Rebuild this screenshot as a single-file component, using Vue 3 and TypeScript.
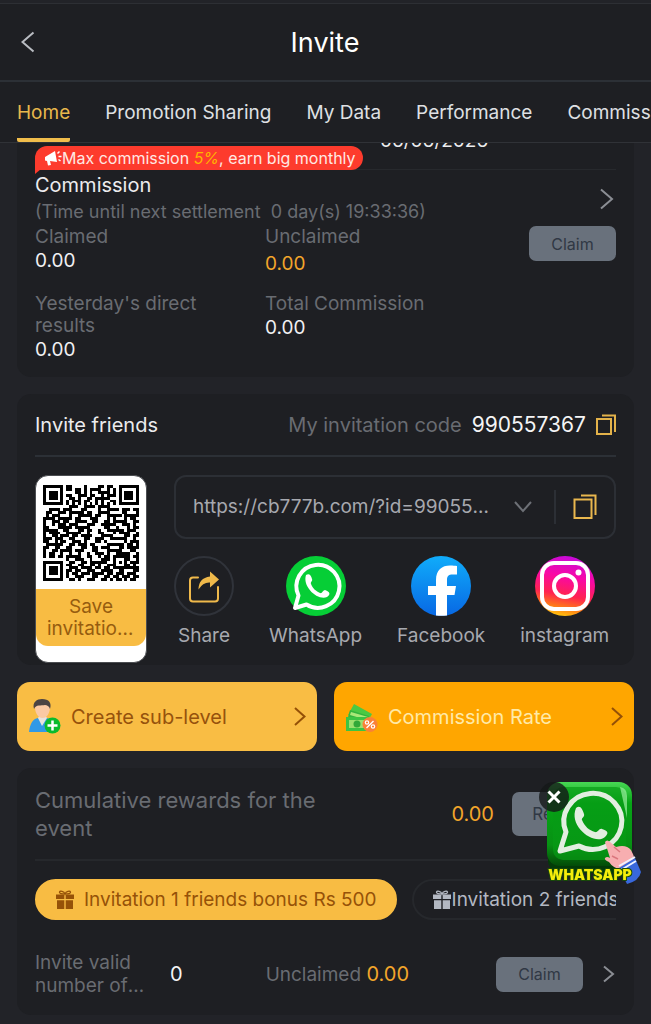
<script setup lang="ts">
import { ref } from 'vue'

interface Channel {
  id: string
  label: string
}

const tabs: string[] = ['Home', 'Promotion Sharing', 'My Data', 'Performance', 'Commission']
const activeTab = ref('Home')

const channels: Channel[] = [
  { id: 'share', label: 'Share' },
  { id: 'whatsapp', label: 'WhatsApp' },
  { id: 'facebook', label: 'Facebook' },
  { id: 'instagram', label: 'instagram' },
]

const inviteLink = ref('https://cb777b.com/?id=990557367')
const inviteCode = '990557367'

const bonuses: string[] = ['Invitation 1 friends bonus Rs 500', 'Invitation 2 friends bonus Rs 1000']
const activeBonus = ref(0)
const floatOpen = ref(true)

const qrRows: string[] = [
  '111111101100001000011011001111111',
  '100000101101101011110010101000001',
  '101110100001101010011110101011101',
  '101110101100111011001011101011101',
  '101110100110100110111110001011101',
  '100000101011101100101001101000001',
  '111111101010101010101010101111111',
  '000000000111001111011110000000000',
  '001111011100011000010011110111011',
  '011001110111110110011110000110001',
  '010111000100111110110011111011111',
  '111101111101100011100010100010110',
  '100111011001111001100110111110011',
  '100101110111000111001111100111010',
  '110001111101111100000110010001011',
  '111110011000110110010011111101110',
  '101111001111100100011000101111001',
  '100110111011011110001111000011011',
  '111011100110001100111001111110010',
  '110010110011101000110100000010111',
  '011111100110111011000011111101101',
  '110011001100011001101110001101111',
  '100110111101110001100011111000110',
  '101100100100100100111010011111001',
  '101101101111100110010110111111011',
  '000000001001110010001110100011001',
  '111111100110011011111100101010111',
  '100000101100110011010011100011010',
  '101110100111011110110110111111111',
  '101110101101100111001111001100011',
  '101110101011011101111011011101110',
  '100000101001110001100110110111011',
  '111111100110100111001101011010110',
]
const qrPath = qrRows
  .map((row, y) => [...row].map((c, x) => (c === '1' ? `M${x} ${y}h1v1h-1z` : '')).join(''))
  .join('')
</script>

<template>
  <div class="page">
    <header class="top">
      <div class="nav">
        <button class="icon-btn back" type="button" aria-label="Back">
          <svg width="14" height="22" viewBox="0 0 14 22"><path d="M12.500 1.500 1.500 11l11 9.500" fill="none" stroke="#b9bcc2" stroke-width="2" /></svg>
        </button>
        <h1>Invite</h1>
      </div>
      <nav class="tabs">
        <a v-for="tab in tabs" :key="tab" href="#" class="tab" :class="{ active: tab === activeTab }" @click.prevent="activeTab = tab">{{ tab }}</a>
      </nav>
    </header>

    <main class="content">
      <section class="card commission">
        <div class="date">06/06/2026</div>
        <div class="ribbon">
          <svg width="18" height="16" viewBox="0 0 18 16" fill="#fff">
            <path d="M1 7 11 1l2 11-7-1 1 4-3 .5L3 11l-2-.5z" />
            <path d="m13.500 3.500 2-2M14.500 6.500h3M14.500 9.500l2 1.500" stroke="#fff" stroke-width="1.500" />
          </svg>
          <span>Max commission <em>5%</em>, earn big monthly</span>
          <svg class="tail" width="6" height="5" viewBox="0 0 6 5"><path d="M0 0h6L0 5z" fill="#fd3b2d" /></svg>
        </div>
        <div class="comm-head">
          <div>
            <h2>Commission</h2>
            <p class="settle">(Time until next settlement &nbsp;0 day(s) 19:33:36)</p>
          </div>
          <button class="icon-btn" type="button" aria-label="Commission details">
            <svg width="14" height="22" viewBox="0 0 14 22"><path d="m1 1.500 11 9.500L1 20.500" fill="none" stroke="#8b8e94" stroke-width="2" /></svg>
          </button>
        </div>
        <div class="stats">
          <div class="stat"><span>Claimed</span><b>0.00</b></div>
          <div class="stat"><span>Unclaimed</span><b class="low">0.00</b></div>
          <button class="grey-btn claim" type="button">Claim</button>
          <div class="stat"><span>Yesterday's direct results</span><b>0.00</b></div>
          <div class="stat wide"><span>Total Commission</span><b>0.00</b></div>
        </div>
      </section>

      <section class="card friends">
        <div class="friends-head">
          <h2>Invite friends</h2>
          <div class="code">
            <span>My invitation code</span>
            <b>{{ inviteCode }}</b>
            <button class="icon-btn" type="button" aria-label="Copy code">
              <svg width="20" height="22" viewBox="0 0 20 22" fill="none" stroke="#e3b24a" stroke-width="2"><path d="M1 5h14v15H1zM6 1.500h13V18" /></svg>
            </button>
          </div>
        </div>
        <div class="friends-body">
          <div class="qr">
            <svg class="qr-code" viewBox="0 0 33 33" shape-rendering="crispEdges"><path :d="qrPath" fill="#000" /></svg>
            <button class="save" type="button"><span>Save</span> <span>invitation code</span></button>
          </div>
          <div class="share">
            <div class="link">
              <select v-model="inviteLink" aria-label="Invitation link">
                <option>https://cb777b.com/?id=990557367</option>
              </select>
              <svg class="down" width="18" height="12" viewBox="0 0 18 12"><path d="m1 1 8 9 8-9" fill="none" stroke="#6d7076" stroke-width="2" /></svg>
              <button class="icon-btn copy" type="button" aria-label="Copy link">
                <svg width="24" height="26" viewBox="0 0 24 26" fill="none" stroke="#e9b74e" stroke-width="2"><path d="M1.500 5.500h17V24h-17zM8 1.500h14.500V21" /></svg>
              </button>
            </div>
            <div class="channels">
              <button v-for="c in channels" :key="c.id" type="button" class="channel">
                <svg v-if="c.id === 'share'" width="60" height="60" viewBox="0 0 60 60">
                  <circle cx="30" cy="30" r="29" fill="none" stroke="#30333a" stroke-width="2" />
                  <path d="M24 21.500h-5q-3 0-3 3v18q0 3 3 3h22q3 0 3-3V31" fill="none" stroke="#efb94b" stroke-width="2" stroke-linecap="round" />
                  <path d="M36 15.500 45 23.500l-9 8v-5q-7-.5-11.500 7Q24.500 22 36 20.500z" fill="#efb94b" />
                </svg>
                <svg v-else-if="c.id === 'whatsapp'" width="60" height="60" viewBox="0 0 60 60">
                  <circle cx="30" cy="30" r="30" fill="#06ce36" />
                  <path d="M9 52l3.500-12.500A21.500 21.500 0 1 1 20.500 48.500z" fill="none" stroke="#fff" stroke-width="4" stroke-linejoin="round" />
                  <path d="M20 19c3-2 5 0 6 4 1 2-2 3-1 5 2 5 5 7 9 9 2 1 3-3 5-3 5 2 6 4 2 7-9 4-25-10-21-22z" fill="#fff" />
                </svg>
                <svg v-else-if="c.id === 'facebook'" width="60" height="60" viewBox="0 0 60 60">
                  <defs><linearGradient id="fb" x1="0" y1="0" x2="0" y2="1"><stop offset="0" stop-color="#10acfa" /><stop offset="1" stop-color="#0868e4" /></linearGradient></defs>
                  <circle cx="30" cy="30" r="30" fill="url(#fb)" />
                  <path d="M25 59.600V39h-8v-9h8v-6c0-10 6-14.500 14-14.500 3 0 5 .2 7 .5v8.500h-4c-5 0-6 2-6 5.500v6h9l-1.500 9H36v20.400q-5 .8-11 .2z" fill="#fff" />
                </svg>
                <svg v-else width="60" height="60" viewBox="0 0 60 60">
                  <defs>
                    <linearGradient id="ig" x1="0.600" y1="0" x2="0.400" y2="1"><stop offset="0" stop-color="#c60adb" /><stop offset="0.350" stop-color="#fa08a4" /><stop offset="0.650" stop-color="#ff2450" /><stop offset="0.850" stop-color="#ff7a18" /><stop offset="1" stop-color="#ffc60c" /></linearGradient>
                  </defs>
                  <circle cx="30" cy="30" r="30" fill="url(#ig)" />
                  <rect x="7" y="7" width="46" height="46" rx="12" fill="none" stroke="#fff" stroke-width="4" />
                  <circle cx="30" cy="30" r="11" fill="none" stroke="#fff" stroke-width="4" />
                  <circle cx="43.500" cy="16.500" r="3" fill="#fff" />
                </svg>
                <span>{{ c.label }}</span>
              </button>
            </div>
          </div>
        </div>
      </section>

      <div class="actions">
        <button class="action sub" type="button">
          <svg width="32" height="36" viewBox="0 0 32 36">
            <path d="M0 33c1-9 4-13 9-14l4 3 5-3c5 1 8 5 8 14z" fill="#3199e6" />
            <path d="m9 19 4 8 5-8-2-3h-5z" fill="#e9e3dc" />
            <path d="M6 8c0-5 15-5 15 0 0 6-3 11-7.500 11S6 14 6 8z" fill="#fbc9a4" />
            <path d="M5 10C3 3 8 0 13 0c7 0 10 4 8 10-1-3-3-4-5-4-4 1-9-1-11 4z" fill="#4b4343" />
            <circle cx="23.500" cy="26.500" r="8" fill="#0abb2d" />
            <path d="M23.500 21.500v10M18.500 26.500h10" stroke="#fff" stroke-width="2.500" />
          </svg>
          <span>Create sub-level</span>
          <svg class="arrow" width="12" height="19" viewBox="0 0 12 19"><path d="m1 1 9.500 8.500L1 18" fill="none" stroke="#945007" stroke-width="2" /></svg>
        </button>
        <button class="action rate" type="button">
          <svg width="32" height="36" viewBox="0 0 32 36">
            <path d="m8 5 18 10-7 12L2 16z" fill="#4bc943" />
            <path d="m4 11 19 6-4 12L1 22z" fill="#34b53d" />
            <path d="m5 13 17 5-1 3-17-5z" fill="#a9e878" />
            <path d="M0 18h24v14H0z" fill="#3cc443" />
            <path d="M3 21h18v8H3z" fill="#9be06e" />
            <circle cx="11" cy="25" r="3.500" fill="#31a838" />
            <circle cx="24" cy="25.500" r="7.500" fill="#fa8137" />
            <path d="m20.500 29 7-7" stroke="#fff" stroke-width="1.500" />
            <circle cx="21" cy="23.500" r="1.700" fill="none" stroke="#fff" stroke-width="1.200" />
            <circle cx="27" cy="27.500" r="1.700" fill="none" stroke="#fff" stroke-width="1.200" />
          </svg>
          <span>Commission Rate</span>
          <svg class="arrow" width="12" height="19" viewBox="0 0 12 19"><path d="m1 1 9.500 8.500L1 18" fill="none" stroke="#945007" stroke-width="2" /></svg>
        </button>
      </div>

      <section class="card rewards">
        <div class="reward-head">
          <p>Cumulative rewards for the event</p>
          <b class="amber">0.00</b>
          <button class="grey-btn receive" type="button">Receive</button>
        </div>
        <div class="bonuses">
          <button v-for="(b, i) in bonuses" :key="b" type="button" class="bonus" :class="{ on: i === activeBonus }" @click="activeBonus = i">
            <svg width="20" height="20" viewBox="0 0 20 20">
              <path d="M1 4.500h8.300V9H1zM10.700 4.500H19V9h-8.300zM2 10.200h7.300V19H2zM10.700 10.200H18V19h-7.300z" fill="currentColor" />
              <path d="M10 4C7 4 4 3.500 4.500 2S9 1 10 4c1-3 5-3.500 5.500-2S13 4 10 4z" fill="none" stroke="currentColor" stroke-width="1.200" />
            </svg>
            <span>{{ b }}</span>
          </button>
        </div>
        <div class="progress">
          <span class="valid">Invite valid number of friends</span>
          <b class="count">0</b>
          <span class="pending">Unclaimed <b class="amber">0.00</b></span>
          <button class="grey-btn" type="button">Claim</button>
          <button class="icon-btn" type="button" aria-label="Bonus details">
            <svg width="12" height="18" viewBox="0 0 12 18"><path d="m1 1.500 9 7.500-9 7.500" fill="none" stroke="#8b8e94" stroke-width="2" /></svg>
          </button>
        </div>
      </section>
    </main>

    <aside v-if="floatOpen" class="float">
      <a href="#" aria-label="WhatsApp" @click.prevent>
        <svg width="104" height="108" viewBox="0 0 104 108">
          <defs>
            <linearGradient id="tile" x1="0" y1="0" x2="0" y2="1"><stop offset="0" stop-color="#48d854" /><stop offset="0.250" stop-color="#06a516" /><stop offset="0.750" stop-color="#079113" /><stop offset="1" stop-color="#034b08" /></linearGradient>
          </defs>
          <rect x="10" y="3" width="84" height="90" rx="13" fill="#033b08" />
          <rect x="9" y="2" width="85" height="84" rx="13" fill="url(#tile)" />
          <rect x="15" y="7" width="73" height="73" rx="10" fill="#079b15" opacity="0.700" />
          <path d="M82 7q7 1 7 9v22q-4-18-7-31z" fill="#9af0a0" opacity="0.700" />
          <path d="m22 71 6-19a29 28 0 1 1 13 14z" fill="none" stroke="#e2eee0" stroke-width="5" stroke-linejoin="round" />
          <path d="M38 28c4-3 6 0 8 6 1 3-3 4-2 6 3 7 7 10 13 12 3 1 4-4 7-3 6 2 7 4 3 8-10 9-37-10-29-29z" fill="#e2eee0" />
          <path d="M67 62q2-3 5 0l6 5q10-3 15 3 3 5 4 11l-15 8q-7-1-11-7-5-2-4-4 2-2 5 0z" fill="#f7aeb0" />
          <path d="m76 67 6 5M74 76l6 3" stroke="#da777e" stroke-width="1.500" />
          <path d="m81 88 16-10 6 14q-2 9-14 12z" fill="#3868dc" />
          <path d="m81 86 16-9M83 90l15-9" stroke="#eef3ff" stroke-width="2" />
          <text class="float-name" x="52" y="100" text-anchor="middle">WHATSAPP</text>
        </svg>
      </a>
      <button class="close" type="button" aria-label="Close" @click="floatOpen = false">
        <svg width="14" height="14" viewBox="0 0 14 14"><path d="m1.500 1.500 11 11m0-11-11 11" stroke="#fff" stroke-width="3" /></svg>
      </button>
    </aside>
  </div>
</template>

<style>
html,
body {
  background: #222328;
}
</style>

<style scoped>
.page {
  display: flow-root;
  min-height: 100vh;
  box-sizing: border-box;
  overflow: hidden;
  background: #222328;
  color: #ececee;
  font-family: Inter, "Liberation Sans", sans-serif;
  font-size: 19px;
  line-height: 22px;
}
h1,
h2,
p {
  margin: 0;
  font-weight: 400;
}
b {
  font-weight: 400;
}
button {
  padding: 0;
  border: 0;
  background: none;
  color: inherit;
  font: inherit;
  cursor: pointer;
}
svg {
  display: block;
  flex: none;
}
.amber {
  color: #f3a62b;
}
.top {
  position: relative;
  z-index: 2;
  margin-top: 3px;
  border-top: 1px solid #2d2f34;
  background: #1e1f23;
}
.nav {
  display: grid;
  grid-template-columns: 40px 1fr 40px;
  align-items: center;
  height: 76px;
  padding: 0 17px 0 16px;
  border-bottom: 2px solid #2c3036;
}
.nav h1 {
  padding-top: 2px;
  color: #fff;
  font-size: 27px;
  line-height: 34px;
  text-align: center;
}
.back {
  padding-left: 5px;
  justify-self: start;
}
.tabs {
  display: flex;
  gap: 35px;
  height: 60px;
  padding-left: 17px;
  overflow: hidden;
  border-bottom: 1px solid #303237;
}
.tab {
  box-sizing: border-box;
  flex: none;
  height: 60px;
  border-bottom: 4px solid transparent;
  color: #dfe0e3;
  line-height: 62px;
  text-decoration: none;
}
.tab.active {
  border-color: #f1bd4b;
  border-radius: 2px;
  color: #e9b84c;
}
.content {
  display: flex;
  flex-direction: column;
  gap: 17px;
  padding: 0 17px 8px;
}
.card {
  padding: 0 18px;
  border-radius: 14px;
  background: #1e1f23;
}
.commission {
  position: relative;
  margin-top: -18px;
  padding-bottom: 16px;
}
.date {
  height: 44px;
  padding-left: 345px;
  border-bottom: 1px solid #27292d;
  line-height: 32px;
}
.ribbon {
  position: absolute;
  top: 21px;
  left: 18px;
  display: flex;
  align-items: center;
  height: 24px;
  padding: 0 7px 0 9px;
  border-radius: 12px 12px 12px 0;
  background: #fd3b2d;
  color: #ffe9e4;
  font-size: 16px;
  white-space: nowrap;
}
.ribbon em {
  color: #ffb400;
}
.tail {
  position: absolute;
  top: 23px;
  left: 0;
}
.comm-head {
  display: flex;
  align-items: center;
  justify-content: space-between;
  padding: 3px 2px 0 0;
}
h2 {
  font-size: 20px;
  line-height: 24px;
}
.settle {
  padding-top: 3px;
  color: #696c72;
  font-size: 18px;
  line-height: 24px;
}
.stats {
  display: grid;
  grid-template-columns: 230fr 264fr 87px;
  row-gap: 18px;
  padding-top: 2px;
  color: #696c72;
}
.stat {
  display: flex;
  flex-direction: column;
  gap: 2px;
  padding-right: 40px;
}
.stat.wide {
  grid-column: span 2;
}
.stat b {
  color: #f0f0f2;
}
.stat .low {
  padding-top: 3px;
  color: #f3a62b;
}
.grey-btn {
  width: 87px;
  height: 35px;
  flex: none;
  border-radius: 7px;
  background: #69717c;
  color: #303844;
  font-size: 16px;
}
.friends {
  padding-bottom: 2px;
}
.friends-head {
  display: flex;
  align-items: center;
  justify-content: space-between;
  height: 61px;
  border-bottom: 2px solid #2c3036;
}
.code {
  display: flex;
  align-items: center;
  gap: 10px;
  color: #696c72;
  font-size: 20px;
}
.code b {
  color: #f4f4f5;
  font-size: 21px;
}
.friends-body {
  display: flex;
  gap: 27px;
  padding-top: 18px;
}
.qr {
  flex: none;
  display: flex;
  flex-direction: column;
  width: 112px;
  height: 188px;
  box-sizing: border-box;
  border: 1px solid #4b4d51;
  border-radius: 13px;
  background: #fff;
  overflow: hidden;
}
.qr-code {
  width: 96px;
  height: 96px;
  margin: 9px 7px 8px;
}
.save {
  height: 57px;
  padding: 0 11px;
  box-sizing: border-box;
  border-radius: 0 0 12px 12px;
  background: #f8bc43;
  color: #965c0f;
}
.save span {
  display: block;
  overflow: hidden;
  text-overflow: ellipsis;
  white-space: nowrap;
}
.share {
  flex: 1;
  min-width: 0;
}
.link {
  display: flex;
  align-items: center;
  height: 64px;
  box-sizing: border-box;
  border: 2px solid #2c2f35;
  border-radius: 12px;
}
.link select {
  flex: 1;
  min-width: 0;
  height: 60px;
  padding: 0 0 0 17px;
  border: 0;
  appearance: none;
  background: transparent;
  color: #a7a9af;
  font: inherit;
  text-overflow: ellipsis;
}
.down {
  margin: 0 22px 0 25px;
}
.copy {
  padding: 4px 17px 4px 17px;
  border-left: 2px solid #2c2f35;
}
.channels {
  display: flex;
  gap: 35px;
  padding-top: 17px;
}
.channel {
  display: flex;
  flex-direction: column;
  align-items: center;
  gap: 9px;
  min-width: 60px;
  color: #a7a9af;
}
.actions {
  display: grid;
  grid-template-columns: 1fr 1fr;
  gap: 17px;
}
.action {
  display: flex;
  align-items: center;
  gap: 10px;
  height: 69px;
  padding: 0 11px 0 12px;
  border-radius: 13px;
  background: #f9bd44;
  color: #96520c;
  font-size: 20px;
  text-align: left;
}
.action span {
  flex: 1;
}
.action.rate {
  background: #ffa600;
  color: #ffeaa8;
}
.rewards {
  padding-bottom: 18px;
}
.reward-head {
  display: flex;
  align-items: center;
  height: 91px;
  border-bottom: 2px solid #26282c;
}
.reward-head p {
  flex: 1;
  padding-right: 100px;
  color: #696c72;
  font-size: 22px;
  line-height: 28px;
}
.reward-head b {
  font-size: 20px;
}
.receive {
  width: 104px;
  height: 44px;
  margin-left: 18px;
  font-size: 17px;
}
.bonuses {
  display: flex;
  gap: 15px;
  padding-top: 18px;
  overflow: hidden;
}
.bonus {
  flex: none;
  display: flex;
  align-items: center;
  height: 41px;
  box-sizing: border-box;
  padding: 0 18px;
  border: 2px solid #26282c;
  border-radius: 21px;
  color: #b3b8c2;
}
.bonus.on {
  gap: 9px;
  border-color: #f8bc43;
  background: #f8bc43;
  color: #965208;
}
.progress {
  display: flex;
  align-items: center;
  padding: 31px 1px 0 0;
  color: #696c72;
}
.valid {
  display: -webkit-box;
  -webkit-box-orient: vertical;
  -webkit-line-clamp: 2;
  overflow: hidden;
  width: 115px;
  line-height: 23px;
}
.count {
  margin: 0 83px 0 20px;
  color: #f4f4f5;
  font-size: 20px;
}
.pending {
  flex: 1;
}
.pending b {
  font-size: 20px;
}
.progress .icon-btn {
  margin-left: 20px;
}
.float {
  position: fixed;
  top: 780px;
  right: 9px;
}
.float-name {
  fill: #f5ed0c;
  stroke: #174a08;
  stroke-width: 2px;
  paint-order: stroke;
  font-family: Inter, sans-serif;
  font-size: 14px;
  font-weight: 900;
}
.close {
  position: absolute;
  top: 2px;
  left: 1px;
  display: grid;
  place-items: center;
  width: 30px;
  height: 30px;
  border-radius: 50%;
  background: rgba(20, 24, 24, 0.8);
}
</style>
